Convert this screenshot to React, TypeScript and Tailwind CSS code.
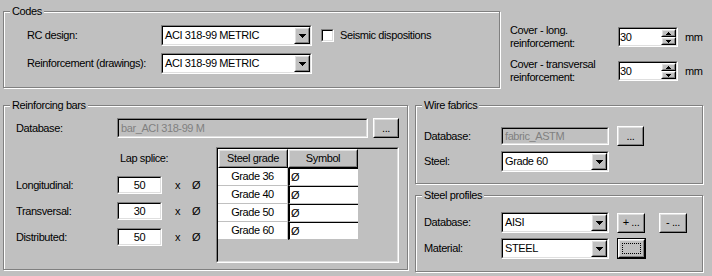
import React from "react";

type P = { className?: string; inner?: string; children?: React.ReactNode };

function Sunken({ className = "", inner = "", children }: P) {
  return (
    <div className={`shrink-0 border border-t-[#808080] border-l-[#808080] border-b-white border-r-white ${className}`}>
      <div className={`w-full h-full border border-t-black border-l-black border-b-[#dfdfdf] border-r-[#dfdfdf] ${inner}`}>
        {children}
      </div>
    </div>
  );
}

function Raised({ className = "", inner = "", children }: P) {
  return (
    <div className={`shrink-0 bg-[#c0c0c0] border border-t-white border-l-white border-b-black border-r-black ${className}`}>
      <div className={`w-full h-full border border-t-[#dfdfdf] border-l-[#dfdfdf] border-b-[#808080] border-r-[#808080] flex items-center justify-center ${inner}`}>
        {children}
      </div>
    </div>
  );
}

function ArrowDown() {
  return (
    <svg width="7" height="4" viewBox="0 0 7 4" className="block">
      <path d="M0 0h7v1H0zM1 1h5v1H1zM2 2h3v1H2zM3 3h1v1H3z" fill="#000" />
    </svg>
  );
}

function SmallUp() {
  return (
    <svg width="5" height="3" viewBox="0 0 5 3" className="block">
      <path d="M2 0h1v1H2zM1 1h3v1H1zM0 2h5v1H0z" fill="#000" />
    </svg>
  );
}

function SmallDown() {
  return (
    <svg width="5" height="3" viewBox="0 0 5 3" className="block">
      <path d="M0 0h5v1H0zM1 1h3v1H1zM2 2h1v1H2z" fill="#000" />
    </svg>
  );
}

function Combo({ value, className = "" }: { value: string; className?: string }) {
  return (
    <Sunken className={`bg-white ${className}`} inner="flex items-center bg-white">
      <span className="flex-1 pl-[2px] whitespace-nowrap overflow-hidden">{value}</span>
      <Raised className="w-[16px] h-full">
        <ArrowDown />
      </Raised>
    </Sunken>
  );
}

function Spin({ value }: { value: string }) {
  return (
    <Sunken className="w-[60px] h-[20px]" inner="flex bg-white">
      <span className="flex-1 flex items-center">{value}</span>
      <div className="flex flex-col w-[15px]">
        <Raised className="h-[8px] w-full">
          <SmallUp />
        </Raised>
        <Raised className="h-[8px] w-full">
          <SmallDown />
        </Raised>
      </div>
    </Sunken>
  );
}

function Btn({ label, className = "" }: { label: string; className?: string }) {
  return (
    <Raised className={className}>
      <span className="whitespace-nowrap">{label}</span>
    </Raised>
  );
}

function GroupBox({ title, className = "", children }: { title: string; className?: string; children?: React.ReactNode }) {
  return (
    <div className={`relative shrink-0 border border-[#808080] shadow-[inset_1px_1px_0_#fff,1px_1px_0_#fff] ${className}`}>
      <span className="absolute left-[6px] top-[-7px] px-[2px] bg-[#c0c0c0] leading-[13px] whitespace-nowrap">{title}</span>
      {children}
    </div>
  );
}

function NumRow({ label, value }: { label: string; value: string }) {
  return (
    <div className="flex items-center h-[18px]">
      <span className="w-[101px] shrink-0">{label}</span>
      <Sunken className="w-[45px] h-[18px]" inner="bg-white flex items-center justify-center">
        {value}
      </Sunken>
      <span className="ml-[13px]">x</span>
      <span className="ml-[12px]">Ø</span>
    </div>
  );
}

const grades = ["Grade 36", "Grade 40", "Grade 50", "Grade 60"];

export default function App() {
  return (
    <div className="w-[712px] h-[276px] bg-[#c0c0c0] overflow-hidden text-black text-[11px] leading-[13px] tracking-[-0.4px] font-['Liberation_Sans',Arial,sans-serif]">
      {/* top row */}
      <div className="flex pl-[3px] pt-[11px]">
        <GroupBox title="Codes" className="w-[497px] h-[77px]">
          <div className="pt-[13px] pl-[23px] flex flex-col gap-[7px]">
            <div className="flex items-center h-[21px]">
              <span className="w-[134px] shrink-0">RC design:</span>
              <Combo value="ACI 318-99 METRIC" className="w-[151px] h-[21px]" />
              <Sunken className="ml-[9px] w-[13px] h-[13px]" inner="bg-white" />
              <span className="ml-[6px] whitespace-nowrap">Seismic dispositions</span>
            </div>
            <div className="flex items-center h-[21px]">
              <span className="w-[134px] shrink-0">Reinforcement (drawings):</span>
              <Combo value="ACI 318-99 METRIC" className="w-[151px] h-[21px]" />
            </div>
          </div>
        </GroupBox>
        <div className="ml-[10px] pt-[13px] flex flex-col gap-[8px]">
          <div className="flex items-center h-[26px]">
            <span className="w-[108px] shrink-0">
              Cover - long.
              <br />
              reinforcement:
            </span>
            <Spin value="30" />
            <span className="ml-[7px]">mm</span>
          </div>
          <div className="flex items-center h-[26px]">
            <span className="w-[108px] shrink-0">
              Cover - transversal
              <br />
              reinforcement:
            </span>
            <Spin value="30" />
            <span className="ml-[7px]">mm</span>
          </div>
        </div>
      </div>

      {/* bottom row */}
      <div className="flex pl-[3px] mt-[17px]">
        <GroupBox title="Reinforcing bars" className="w-[405px] h-[165px]">
          <div className="pt-[12px] pl-[12px]">
            <div className="flex items-center h-[20px]">
              <span className="w-[101px] shrink-0">Database:</span>
              <Sunken className="w-[251px] h-[20px]" inner="bg-[#c0c0c0] flex items-center pl-[2px] text-[#808080]">
                bar_ACI 318-99 M
              </Sunken>
              <Btn label="..." className="ml-[5px] w-[26px] h-[20px]" />
            </div>
            <div className="flex mt-[9px]">
              <div className="w-[200px] shrink-0 flex flex-col">
                <span className="pl-[104px] mt-[4px] leading-[14px]">Lap splice:</span>
                <div className="mt-[11px] flex flex-col gap-[8px]">
                  <NumRow label="Longitudinal:" value="50" />
                  <NumRow label="Transversal:" value="30" />
                  <NumRow label="Distributed:" value="50" />
                </div>
              </div>
              <Sunken className="w-[183px] h-[116px]" inner="bg-[#c0c0c0]">
                <div className="flex">
                  <Btn label="Steel grade" className="w-[70px] h-[19px]" />
                  <Btn label="Symbol" className="w-[70px] h-[19px]" />
                </div>
                {grades.map((g) => (
                  <div key={g} className="flex h-[18px]">
                    <div className="w-[70px] bg-white border-r border-b border-[#c0c0c0] flex items-center justify-center">
                      {g}
                    </div>
                    <div className="w-[70px] bg-white border-b border-b-[#c0c0c0] border-l-2 border-l-black border-t border-t-black flex items-center pl-[1px]">
                      Ø
                    </div>
                  </div>
                ))}
              </Sunken>
            </div>
          </div>
        </GroupBox>

        <div className="ml-[7px] flex flex-col">
          <GroupBox title="Wire fabrics" className="w-[288px] h-[79px]">
            <div className="pt-[20px] pl-[8px] flex flex-col">
              <div className="flex items-center h-[20px]">
                <span className="w-[77px] shrink-0">Database:</span>
                <Sunken className="w-[108px] h-[18px]" inner="bg-[#c0c0c0] flex items-center pl-[2px] text-[#808080]">
                  fabric_ASTM
                </Sunken>
                <Btn label="..." className="ml-[8px] w-[27px] h-[20px]" />
              </div>
              <div className="flex items-center h-[21px] mt-[5px]">
                <span className="w-[77px] shrink-0">Steel:</span>
                <Combo value="Grade 60" className="w-[108px] h-[21px]" />
              </div>
            </div>
          </GroupBox>
          <GroupBox title="Steel profiles" className="mt-[11px] w-[288px] h-[77px]">
            <div className="pt-[16px] pl-[8px] flex flex-col">
              <div className="flex items-center h-[21px]">
                <span className="w-[77px] shrink-0">Database:</span>
                <Combo value="AISI" className="w-[108px] h-[21px]" />
                <Btn label="+ ..." className="ml-[8px] w-[28px] h-[20px]" />
                <Btn label="- ..." className="ml-[14px] w-[28px] h-[20px]" />
              </div>
              <div className="flex items-center h-[21px] mt-[5px]">
                <span className="w-[77px] shrink-0">Material:</span>
                <Combo value="STEEL" className="w-[108px] h-[21px]" />
                <div className="ml-[8px] w-[29px] h-[21px] border border-black shrink-0">
                  <Raised className="w-full h-full">
                    <div className="w-[19px] h-[11px] border border-dotted border-black" />
                  </Raised>
                </div>
              </div>
            </div>
          </GroupBox>
        </div>
      </div>
    </div>
  );
}
